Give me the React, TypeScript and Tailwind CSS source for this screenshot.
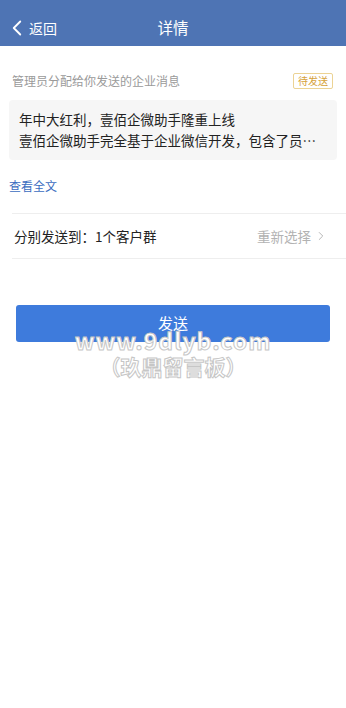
import { ChevronLeft, ChevronRight } from "lucide-react";

const FONT = { fontFamily: '"Noto Sans CJK SC", "Noto Sans", sans-serif' };

export default function App() {
  return (
    <div className="w-[346px] h-[708px] bg-white relative overflow-hidden" style={FONT}>
      {/* header */}
      <div className="h-[46px] bg-[#4e74b4] flex items-center relative text-white pt-[10px]">
        <div className="flex items-center pl-[4px]">
          <ChevronLeft className="w-[26px] h-[26px]" strokeWidth={1.7} />
          <span className="text-[14px] ml-[-1px]">返回</span>
        </div>
        <div className="absolute left-0 right-0 top-[10px] bottom-0 flex items-center justify-center text-[15.5px] pointer-events-none">
          详情
        </div>
      </div>

      <div className="flex items-center justify-between pl-[12px] pr-[13px] pt-[26px]">
        <span className="text-[12px] text-[#9a9a9a]">管理员分配给你发送的企业消息</span>
        <span className="border border-[#ecd394] rounded-[2px] text-[10px] text-[#d6a23a] px-[4px] leading-[14px]">待发送</span>
      </div>

      <div className="mx-[9px] mt-[10px] bg-[#f6f6f6] rounded-[4px] pl-[10px] pr-[12px] py-[9px] text-[13.5px] leading-[21px] text-[#222]">
        <div>年中大红利，壹佰企微助手隆重上线</div>
        <div className="truncate">壹佰企微助手完全基于企业微信开发，包含了员工管理等功能</div>
      </div>

      <div className="pl-[9px] mt-[17px] text-[12px] text-[#3b6cc0]">查看全文</div>

      <div className="ml-[12px] mt-[18px] border-t border-[#eeeeee]" />
      <div className="flex items-center justify-between pl-[14px] pr-[18px] h-[44px]">
        <span className="text-[13.5px] text-[#222]">分别发送到：1个客户群</span>
        <span className="flex items-center text-[13.5px] text-[#b2b2b2]">
          重新选择
          <ChevronRight className="w-[14px] h-[14px] ml-[3px]" strokeWidth={1.6} />
        </span>
      </div>
      <div className="ml-[12px] border-t border-[#eeeeee]" />

      <div className="px-[16px] pt-[46px] relative">
        <button className="w-full h-[37px] bg-[#3e7bdc] rounded-[3px] text-white text-[15px] flex items-center justify-center">
          发送
        </button>
        <div className="absolute left-0 right-0 top-[69px] flex flex-col items-center pointer-events-none">
          <span className="text-[23px] font-bold leading-[24px] tracking-[1px] text-white [-webkit-text-stroke:1px_#c6c6c6]">
            www.9dlyb.com
          </span>
          <span className="text-[21px] font-bold leading-[28px] text-white [-webkit-text-stroke:1px_#c6c6c6]">
            （玖鼎留言板）
          </span>
        </div>
      </div>
    </div>
  );
}
